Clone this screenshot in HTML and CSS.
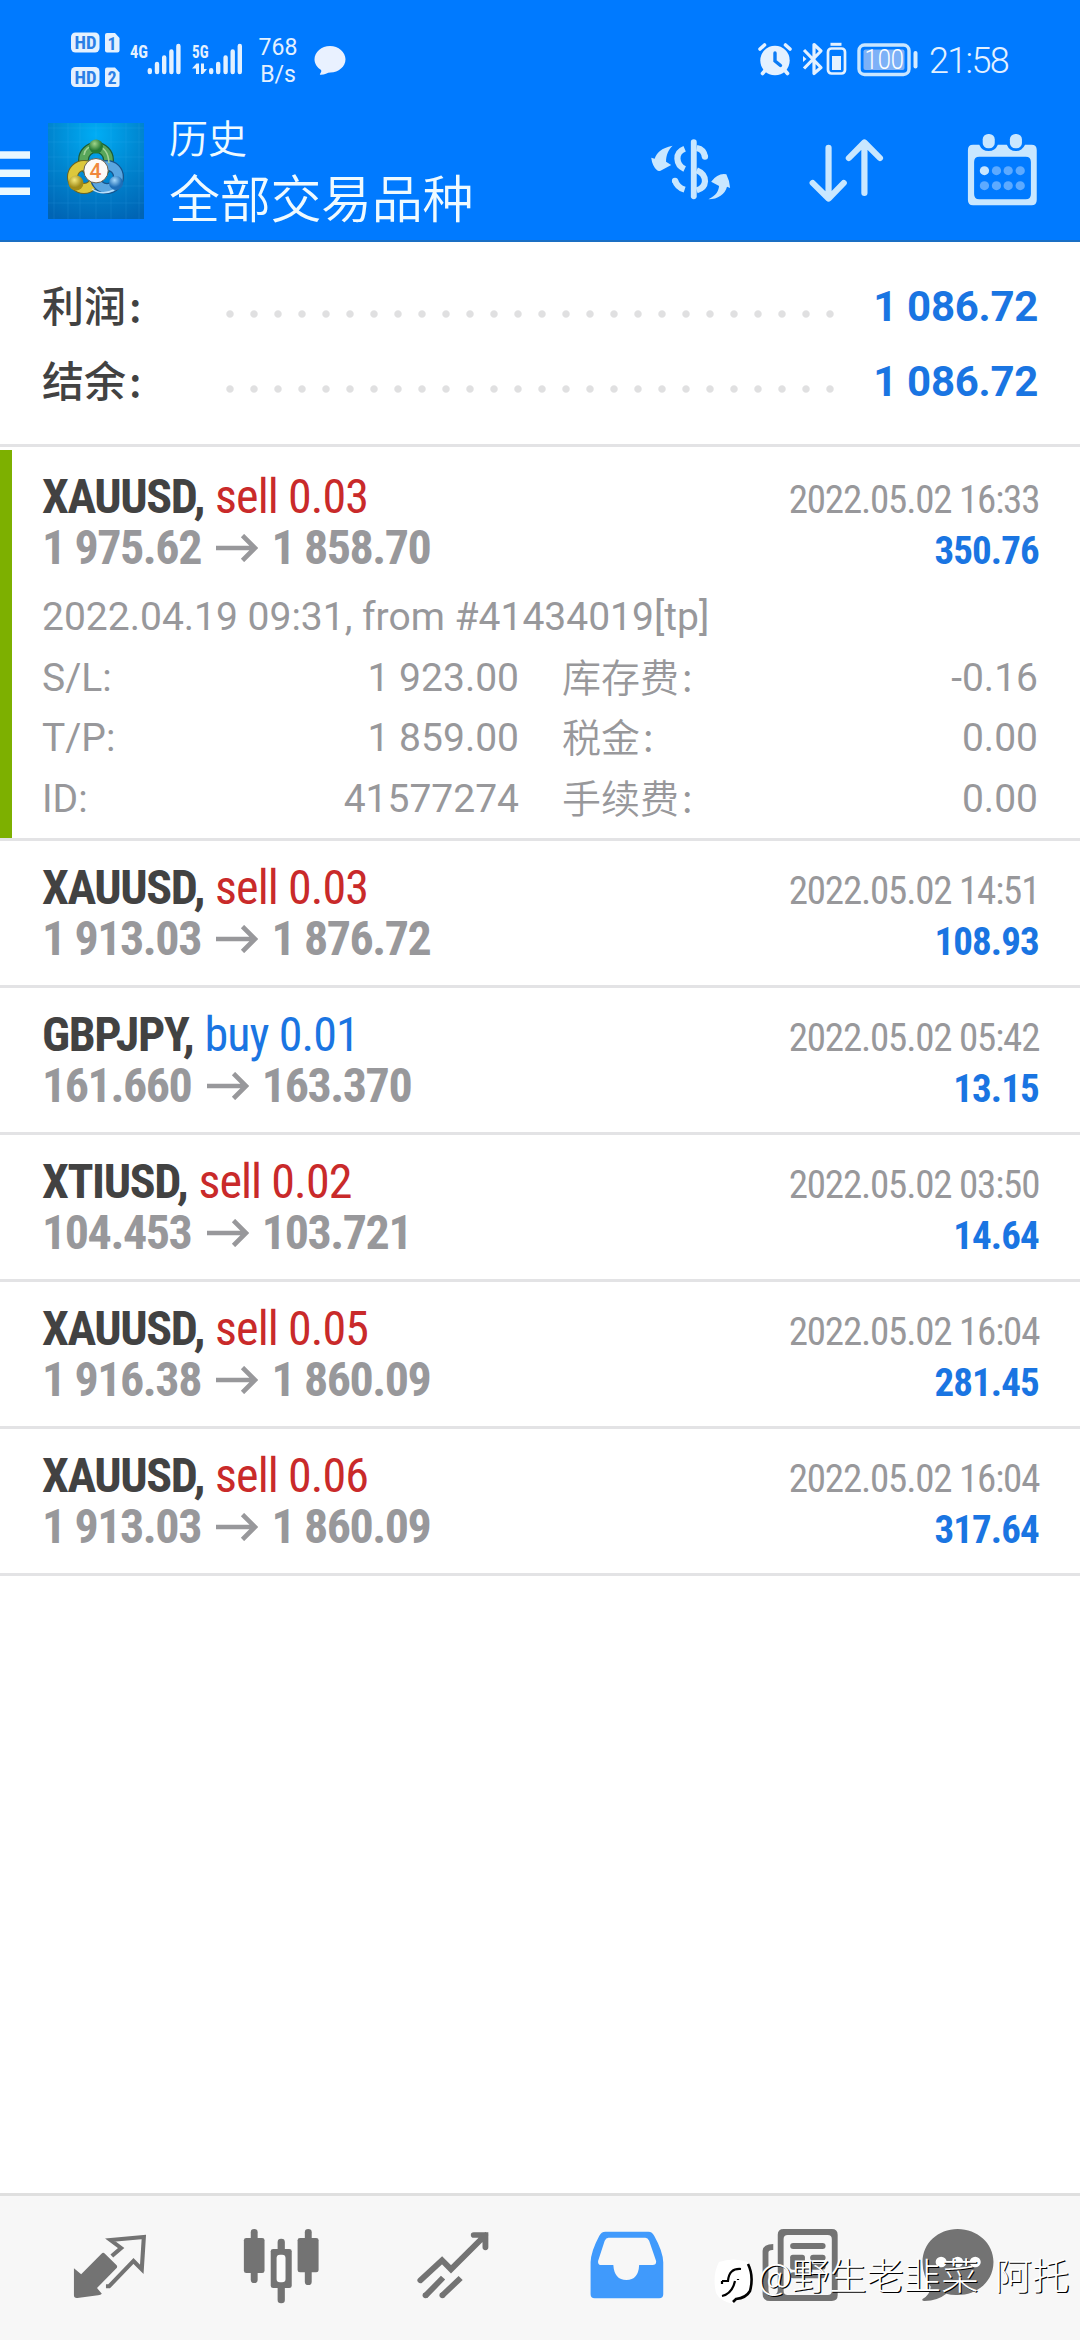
FILE: index.html
```html
<!DOCTYPE html>
<html lang="zh-CN">
<head>
<meta charset="utf-8">
<title>历史</title>
<link rel="stylesheet" href="styles.css">
</head>
<body>
<svg class="defs" width="0" height="0" aria-hidden="true">
  <symbol id="arrow" viewBox="0 0 42 28"><path d="M0 14H39M26.5 1.5L39 14L26.5 26.500" fill="none" stroke="#98989b" stroke-width="4.600"/></symbol>
</svg>
<header class="top">
  <div class="status">
    <svg class="sim" width="52" height="58" viewBox="70 31 52 58">
      <g fill="#e4f1ff">
        <rect x="71" y="32.500" width="28.500" height="20" rx="4.500"/>
        <path d="M107 33h8l4.500 5v12.500q0 2-2 2h-10.500q-2 0-2-2V35q0-2 2-2z"/>
        <rect x="71" y="67" width="28.500" height="20" rx="4.500"/>
        <path d="M107 67.500h8l4.500 5V85q0 2-2 2h-10.500q-2 0-2-2V69.500q0-2 2-2z"/>
      </g>
      <g class="simtext" text-anchor="middle">
        <text x="85.500" y="49" textLength="22" lengthAdjust="spacingAndGlyphs">HD</text><text x="112" y="49.500">1</text>
        <text x="85.500" y="83.500" textLength="22" lengthAdjust="spacingAndGlyphs">HD</text><text x="112" y="84">2</text>
      </g>
    </svg>
    <svg class="signal" width="114" height="36" viewBox="129 41 114 36">
      <g class="net"><text x="130" y="57.700" textLength="18" lengthAdjust="spacingAndGlyphs">4G</text><text x="192" y="57.700" textLength="16.500" lengthAdjust="spacingAndGlyphs">5G</text></g>
      <path d="M149.800 70.300V72M157 64V72M164.200 57.500V72M171.400 51.500V72M178.400 46V72M211.200 70.300V72M218.200 64V72M225.600 57.500V72M232.700 51.500V72M239.800 46V72" stroke="#e4f1ff" stroke-width="4.400" stroke-linecap="round"/>
      <path d="M192 68.500l4.500-5h2.500v10.500h-3v-5.500zM201 63.500h3v5.500h3l-4 5h-2z" fill="#e4f1ff"/>
    </svg>
    <div class="speed"><span>768</span><span>B/s</span></div>
    <svg class="bubble" width="32" height="32" viewBox="312.500 45 32 32"><path d="M328.500 46c8.500 0 15.500 6 15.500 13.300s-7 13.200-15 13.200c-3 0-6 2.300-9.500 2.300c-1.500 0-1.300-.8-.5-1.600q1.300-1.700.6-3.200c-3.800-2.500-6.600-6-6.600-10.700c0-7.300 7-13.300 15.500-13.300z" fill="#e9f1ff"/></svg>
    <svg class="sys" width="164" height="36" viewBox="755 42 164 36">
      <circle cx="774" cy="60.500" r="14.700" fill="#e4f1ff"/>
      <path d="M764.500 70l-3 3.500M783.500 70l3 3.500M759 49l4.500-4M789 49l-4.500-4" stroke="#e4f1ff" stroke-width="3.600" stroke-linecap="round"/>
      <path d="M774 53V61L779.500 65.500" fill="none" stroke="#0b7bf5" stroke-width="3.400" stroke-linecap="round"/>
      <path d="M803 50L820 67.500L813 73.500V44.500L820 51L803 68.500" fill="none" stroke="#e4f1ff" stroke-width="3.200" stroke-linejoin="round"/>
      <path d="M802 56v6l3.500-3z" fill="#e4f1ff"/>
      <path d="M829.500 44.300H840.500" stroke="#e4f1ff" stroke-width="3"/>
      <rect x="827" y="48.500" width="17" height="25" rx="3.500" fill="none" stroke="#e4f1ff" stroke-width="2.700"/>
      <rect x="831" y="56" width="9" height="14" fill="#e4f1ff"/>
      <rect x="858" y="45" width="50" height="29.500" rx="5.500" fill="none" stroke="#c9e6ff" stroke-width="3.400"/>
      <rect x="862.500" y="49.500" width="41" height="20.500" rx="2" fill="#7db1f7"/>
      <path d="M914.500 53V66.500" stroke="#d6ecff" stroke-width="4" stroke-linecap="round"/>
      <text class="battery" x="863.500" y="69" textLength="39.500" lengthAdjust="spacingAndGlyphs">100</text>
    </svg>
    <span class="clock">21:58</span>
  </div>
  <div class="bar">
    <svg class="menu" width="30" height="46" viewBox="0 0 30 46"><path d="M0 4H30M0 22.200H30M0 40.200H30" stroke="#eaf8ff" stroke-width="7.600"/></svg>
    <svg class="logo" width="96" height="96" viewBox="48 123 96 96">
      <defs>
        <radialGradient id="bg" cx=".5" cy=".12" r=".95"><stop offset="0" stop-color="#00adf5"/><stop offset=".5" stop-color="#0086d0"/><stop offset="1" stop-color="#0064b4"/></radialGradient>
        <radialGradient id="gr" cx=".4" cy=".3"><stop offset="0" stop-color="#9fd58a"/><stop offset="1" stop-color="#257a35"/></radialGradient>
        <radialGradient id="ye" cx=".4" cy=".3"><stop offset="0" stop-color="#f6ea7c"/><stop offset="1" stop-color="#a18c18"/></radialGradient>
        <radialGradient id="bl" cx=".4" cy=".3"><stop offset="0" stop-color="#a5d8fa"/><stop offset="1" stop-color="#1f6fb8"/></radialGradient>
      </defs>
      <rect x="48" y="123" width="96" height="96" fill="url(#bg)"/>
      <path d="M54 123V219M68 123V219M80 123V219M96 123V219M111 123V219M126 123V219M139 123V219M48 128H144M48 142H144M48 157H144M48 171H144M48 186H144M48 203H144" stroke="#4cc4f5" stroke-opacity=".13"/>
      <circle cx="96" cy="160" r="12.500" fill="none" stroke="#1d5d36" stroke-width="11"/>
      <circle cx="96" cy="160" r="12.500" fill="none" stroke="#58a65a" stroke-width="8.500"/>
      <circle cx="84" cy="177" r="11.500" fill="none" stroke="#6d6420" stroke-width="11"/>
      <circle cx="84" cy="177" r="11.500" fill="none" stroke="#dcc83c" stroke-width="9"/>
      <circle cx="107" cy="177" r="11.500" fill="none" stroke="#17548b" stroke-width="11"/>
      <circle cx="107" cy="177" r="11.500" fill="none" stroke="#5aa6e0" stroke-width="8.500"/>
      <path d="M84 155Q85 146 96 146Q108 147 109 163" fill="none" stroke="#a4d398" stroke-width="1.500"/>
      <path d="M92 189Q102 196 114 190" fill="none" stroke="#b8defa" stroke-width="1.500"/>
      <circle cx="96" cy="146.500" r="7" fill="url(#gr)"/><circle cx="76" cy="183" r="7.500" fill="url(#ye)"/><circle cx="116" cy="183" r="7" fill="url(#bl)"/>
      <circle cx="96" cy="170.700" r="12.200" fill="#fdfaf7" stroke="#6a6350" stroke-width="1"/>
      <text class="four" x="95.500" y="178" text-anchor="middle">4</text>
    </svg>
    <div class="titles"><h1>历史</h1><h2>全部交易品种</h2></div>
    <svg class="act-money" width="93" height="105" viewBox="300 345 270 315" preserveAspectRatio="none">
      <g fill="#c9e7ff"><path d="M383 437C350 443 336 460 331 476L321 473Q324 498 338 511Q342 515 348 512L379 495L364 485C364 465 371 449 383 437z"/>
      <path d="M487 598C510 585 516 575 518 558L495 545Q515 518 539 523Q549 543 550 564L541 560C535 583 515 597 487 598z"/></g>
      <path d="M418 446Q396 455 397 476Q398 498 418 507M390 541Q396 562 418 569M453 444Q474 448 477 471M453 511Q477 521 477 544Q476 564 453 571" fill="none" stroke="#c9e7ff" stroke-width="18"/>
      <circle cx="477" cy="470" r="9" fill="#c9e7ff"/><circle cx="390" cy="542" r="9" fill="#c9e7ff"/>
      <path d="M444.500 426V589" stroke="#c9e7ff" stroke-width="17" stroke-linecap="round"/>
    </svg>
    <svg class="act-sort" width="90" height="105" viewBox="760 345 261 315" preserveAspectRatio="none">
      <path d="M837 443V594M791 549L837 596L881 549M941 579V428M896 474L941 427L986 474" fill="none" stroke="#c9e7ff" stroke-width="18" stroke-linecap="round" stroke-linejoin="round"/>
    </svg>
    <svg class="act-cal" width="85" height="105" viewBox="1220 345 247 315" preserveAspectRatio="none">
      <path fill="#c9e7ff" fill-rule="evenodd" d="M1258 434H1276Q1284 453 1303 453T1330 434H1356Q1364 453 1382 453T1409 434H1428Q1443 434 1443 450V600Q1443 616 1428 616H1258Q1243 616 1243 600V450Q1243 434 1258 434zM1276 470Q1261 470 1261 486V582Q1261 598 1276 598H1411Q1426 598 1426 582V486Q1426 470 1411 470z"/>
      <rect x="1286" y="402" width="35" height="43" rx="16" fill="#c9e7ff"/><rect x="1365" y="402" width="35" height="43" rx="16" fill="#c9e7ff"/>
      <circle cx="1291" cy="512" r="13.500" fill="#c9e7ff"/>
      <g fill="#5daaff"><circle cx="1326" cy="512" r="13.500"/><circle cx="1360" cy="512" r="13.500"/><circle cx="1395" cy="512" r="13.500"/><circle cx="1291" cy="557" r="13.500"/><circle cx="1326" cy="557" r="13.500"/><circle cx="1360" cy="557" r="13.500"/><circle cx="1395" cy="557" r="13.500"/></g>
    </svg>
  </div>
</header>

<section class="summary">
  <div class="sum"><span class="label">利润<i>:</i></span><span class="dots"></span><b>1 086.72</b></div>
  <div class="sum"><span class="label">结余<i>:</i></span><span class="dots"></span><b>1 086.72</b></div>
</section>

<main class="deals">
  <article class="deal open">
    <div class="line"><span class="name"><b>XAUUSD,</b> <span class="sell">sell 0.03</span></span><time>2022.05.02 16:33</time></div>
    <div class="line"><span class="price">1 975.62<svg width="42" height="28"><use href="#arrow"/></svg>1 858.70</span><span class="profit">350.76</span></div>
    <div class="details">
      <p class="wide">2022.04.19 09:31, from #41434019[tp]</p>
      <p><span>S/L:</span><span>1 923.00</span></p><p><span class="zh">库存费<i>:</i></span><span>-0.16</span></p>
      <p><span>T/P:</span><span>1 859.00</span></p><p><span class="zh">税金<i>:</i></span><span>0.00</span></p>
      <p><span>ID:</span><span>41577274</span></p><p><span class="zh">手续费<i>:</i></span><span>0.00</span></p>
    </div>
  </article>
  <article class="deal">
    <div class="line"><span class="name"><b>XAUUSD,</b> <span class="sell">sell 0.03</span></span><time>2022.05.02 14:51</time></div>
    <div class="line"><span class="price">1 913.03<svg width="42" height="28"><use href="#arrow"/></svg>1 876.72</span><span class="profit">108.93</span></div>
  </article>
  <article class="deal">
    <div class="line"><span class="name"><b>GBPJPY,</b> <span class="buy">buy 0.01</span></span><time>2022.05.02 05:42</time></div>
    <div class="line"><span class="price">161.660<svg width="42" height="28"><use href="#arrow"/></svg>163.370</span><span class="profit">13.15</span></div>
  </article>
  <article class="deal">
    <div class="line"><span class="name"><b>XTIUSD,</b> <span class="sell">sell 0.02</span></span><time>2022.05.02 03:50</time></div>
    <div class="line"><span class="price">104.453<svg width="42" height="28"><use href="#arrow"/></svg>103.721</span><span class="profit">14.64</span></div>
  </article>
  <article class="deal">
    <div class="line"><span class="name"><b>XAUUSD,</b> <span class="sell">sell 0.05</span></span><time>2022.05.02 16:04</time></div>
    <div class="line"><span class="price">1 916.38<svg width="42" height="28"><use href="#arrow"/></svg>1 860.09</span><span class="profit">281.45</span></div>
  </article>
  <article class="deal">
    <div class="line"><span class="name"><b>XAUUSD,</b> <span class="sell">sell 0.06</span></span><time>2022.05.02 16:04</time></div>
    <div class="line"><span class="price">1 913.03<svg width="42" height="28"><use href="#arrow"/></svg>1 860.09</span><span class="profit">317.64</span></div>
  </article>
</main>

<nav class="tabs">
  <svg viewBox="70 48 500 432" preserveAspectRatio="none">
    <path fill="#737373" d="M215 265L236 283L295 221Q300 216 305 221L339 256Q342 260 339 264L282 324L296 341Q293 344 285 346L225 354Q215 355 215 346z"/>
    <path fill="none" stroke="#737373" stroke-width="12" d="M325 228L352 204L321 180L418 171L412 268L388 243L317 319H308"/>
  </svg>
  <svg viewBox="570 48 500 432" preserveAspectRatio="none">
    <g fill="#737373"><rect x="729" y="147" width="20" height="162" rx="10"/><rect x="709" y="174" width="60" height="105" rx="7"/><rect x="807" y="176" width="21" height="194" rx="10"/><rect x="787" y="207" width="61" height="117" rx="7"/><rect x="886" y="147" width="20" height="168" rx="10"/><rect x="865" y="174" width="61" height="103" rx="7"/></g>
    <rect x="804" y="224" width="26" height="83" rx="10" fill="#fcfcfc"/>
  </svg>
  <svg viewBox="1070 48 500 432" preserveAspectRatio="none">
    <path fill="none" stroke="#737373" stroke-width="17" stroke-linecap="round" d="M1222 301L1285 241L1311 268L1411 165M1377 165H1411V202"/>
    <path fill="none" stroke="#737373" stroke-width="17" d="M1236 348L1288 293M1284 348L1339 294"/>
    <circle cx="1237" cy="346" r="8.500" fill="#737373"/><circle cx="1286" cy="346" r="8.500" fill="#737373"/>
  </svg>
  <svg viewBox="2 48 500 432" preserveAspectRatio="none">
    <path fill="#409afc" fill-rule="evenodd" d="M189 155H314Q325 155 331 168Q356 214 357 247V343Q357 355 345 355H158Q146 355 146 343V247Q147 214 171 168Q177 155 189 155zM198 173Q191 173 187 182L168 242Q166 255 177 255H212Q215 300 250 300T287 255H326Q338 255 336 242L316 182Q312 173 305 173z"/>
  </svg>
  <svg viewBox="502 48 500 432" preserveAspectRatio="none">
    <path fill="#737373" fill-rule="evenodd" d="M707 147H847Q864 147 864 164V346Q864 363 847 363H668Q646 363 646 341V212Q648 192 677 192V210Q663 209 663 218V330Q663 345 677 345Q690 344 690 330V164Q690 147 707 147zM719 165Q707 165 707 177V333Q707 345 719 345H835Q847 345 847 333V177Q847 165 835 165z"/>
    <path stroke="#737373" stroke-width="18" stroke-linecap="round" d="M735 198H820M793 233H820M793 260H820M735 286H820"/>
    <rect x="726" y="224" width="43" height="45" rx="8" fill="#737373"/>
  </svg>
  <svg viewBox="1002 48 500 432" preserveAspectRatio="none">
    <path fill="#737373" d="M1213 147C1270 147 1317 190 1317 246C1317 304 1270 345 1213 345Q1195 346 1180 341Q1155 362 1117 363Q1108 363 1111 357Q1132 345 1135 320Q1111 288 1111 246C1111 190 1156 147 1213 147z"/>
    <g fill="#fff"><circle cx="1165" cy="246" r="16"/><circle cx="1213" cy="246" r="16"/><circle cx="1264" cy="246" r="16"/></g>
  </svg>
  <div class="watermark">
    <svg width="40" height="48" viewBox="714 2258 40 48">
      <path d="M719 2262Q733 2257 748 2262Q753 2280 749 2293Q744 2299 736 2300L733 2304Q720 2301 716 2293Q712 2275 719 2262z" fill="#fff"/>
      <path d="M722 2281H728Q729 2268 741 2269M722 2281V2284M738 2279V2280M735 2281Q732 2294 722 2296" fill="none" stroke="#000" stroke-width="2.200"/>
      <path d="M748 2264Q754 2276 750 2291Q746 2298 736 2299L733 2302" fill="none" stroke="#000" stroke-width="2.600"/>
    </svg>
    <span>@野生老韭菜 阿托</span>
  </div>
</nav>
</body>
</html>
```
FILE: styles.css
```css
* { box-sizing: border-box; }
body {
  margin: 0;
  width: 1080px;
  height: 2340px;
  display: flex;
  flex-direction: column;
  background: #fff;
  color: #424242;
  font-family: Roboto, "Noto Sans CJK SC", sans-serif;
  overflow: hidden;
}
h1, h2, p { margin: 0; font-weight: 400; }
i { font-style: normal; }
svg { display: block; flex: none; }
.defs { position: absolute; }

.top { height: 242px; background: #007aff; border-bottom: 2px solid #1a6fc4; }
.status { display: flex; height: 100px; align-items: flex-start; color: #e4f1ff; }
.sim { margin: 31px 0 0 70px; }
.simtext { font: 700 18px "Roboto Condensed", sans-serif; fill: #2b7fe6; }
.signal { margin: 41px 0 0 7px; }
.net { font: 700 19px "Roboto Condensed", sans-serif; fill: #e4f1ff; }
.speed { display: flex; flex-direction: column; width: 48px; margin: 33.5px 0 0 11px; text-align: center; font-size: 23px; line-height: 27px; }
.bubble { margin: 45px 0 0 11.500px; }
.sys { margin: 42px 0 0 auto; }
.battery { font: 300 27px Roboto, sans-serif; fill: #fff; }
.clock { width: 81px; margin: 40px 70px 0 9px; font: 350 36px/42px Roboto, sans-serif; letter-spacing: -1.700px; white-space: nowrap; }

.bar { display: flex; height: 140px; align-items: flex-start; }
.menu { margin-top: 51px; }
.logo { margin: 23px 0 0 18px; }
.four { font: 500 21px Roboto, sans-serif; fill: #f0883c; }
.titles { margin: 6px 0 0 25px; color: #effaff; font-family: "Noto Sans CJK SC", sans-serif; }
.titles h1 { font-size: 39px; line-height: 60px; font-weight: 350; }
.titles h2 { font-size: 51px; line-height: 60px; font-weight: 350; letter-spacing: -.3px; }
.act-money { margin: 15px 65px 0 auto; }
.act-sort { margin: 15px 68px 0 0; }
.act-cal { margin: 15px 35px 0 0; }

.summary { height: 205px; padding: 27px 42px 0 42px; border-bottom: 3px solid #e3e3e5; }
.sum { display: flex; height: 75px; align-items: center; }
.label { width: 176px; padding-bottom: 5px; font: 450 42px/60px "Noto Sans CJK SC", sans-serif; }
.label i, .zh i { margin-left: 3px; }
.dots { width: 624px; height: 24px; margin-top: 15px; background: radial-gradient(circle, #e0e0e1 3.200px, transparent 4.200px) 0 0 / 24px 24px; }
.sum b { margin-left: auto; font-size: 42px; font-weight: 700; color: #1a75e2; letter-spacing: -.3px; }

.deals { flex: 1; font-family: "Roboto Condensed", Roboto, sans-serif; }
.deal { height: 147px; padding: 21px 42px 0 42px; border-bottom: 3px solid #e3e3e5; }
.deal.open { position: relative; height: 394px; padding-top: 24px; }
.deal.open::before { content: ""; position: absolute; left: 0; top: 3px; bottom: 0; width: 12px; background: #7db000; }
.line { display: flex; justify-content: space-between; align-items: baseline; height: 51px; line-height: 51px; font-size: 48px; white-space: nowrap; }
.name b { letter-spacing: -1.400px; }
.sell { color: #c92a2a; letter-spacing: -.900px; }
.buy { color: #1a75e2; letter-spacing: -.900px; }
.price { display: flex; align-items: center; font-weight: 700; color: #98989b; letter-spacing: -1.450px; }
.price svg { margin: 0 13px 0 15.500px; }
time { font-size: 39px; color: #98989b; letter-spacing: -1.200px; margin-right: -1.200px; }
.profit { font-size: 39px; font-weight: 700; color: #1a75e2; letter-spacing: -.900px; margin-right: -.900px; }
.details { display: grid; grid-template-columns: 477px 475px; column-gap: 44px; margin-top: 14px; font: 400 39px/60.700px Roboto, sans-serif; color: #98989b; }
.details p { display: flex; justify-content: space-between; height: 60.700px; }
.details .wide { grid-column: 1 / -1; }
.zh { font-family: "Noto Sans CJK SC", sans-serif; font-weight: 330; margin: -3px 0 0 -1px; }

.tabs { position: relative; display: flex; height: 147px; padding-left: 24px; background: #f7f7f7; border-top: 3px solid #dfdfdf; }
.tabs > svg { width: 172.200px; height: 144px; }
.watermark { position: absolute; left: 714px; top: 62px; display: flex; gap: 4px; }
.watermark span { font: 300 37.300px/46px "Noto Sans CJK SC", sans-serif; color: #fff; text-shadow: 1.200px 1.200px 0 #000; white-space: nowrap; margin-top: -7px; word-spacing: 8px; }
```
